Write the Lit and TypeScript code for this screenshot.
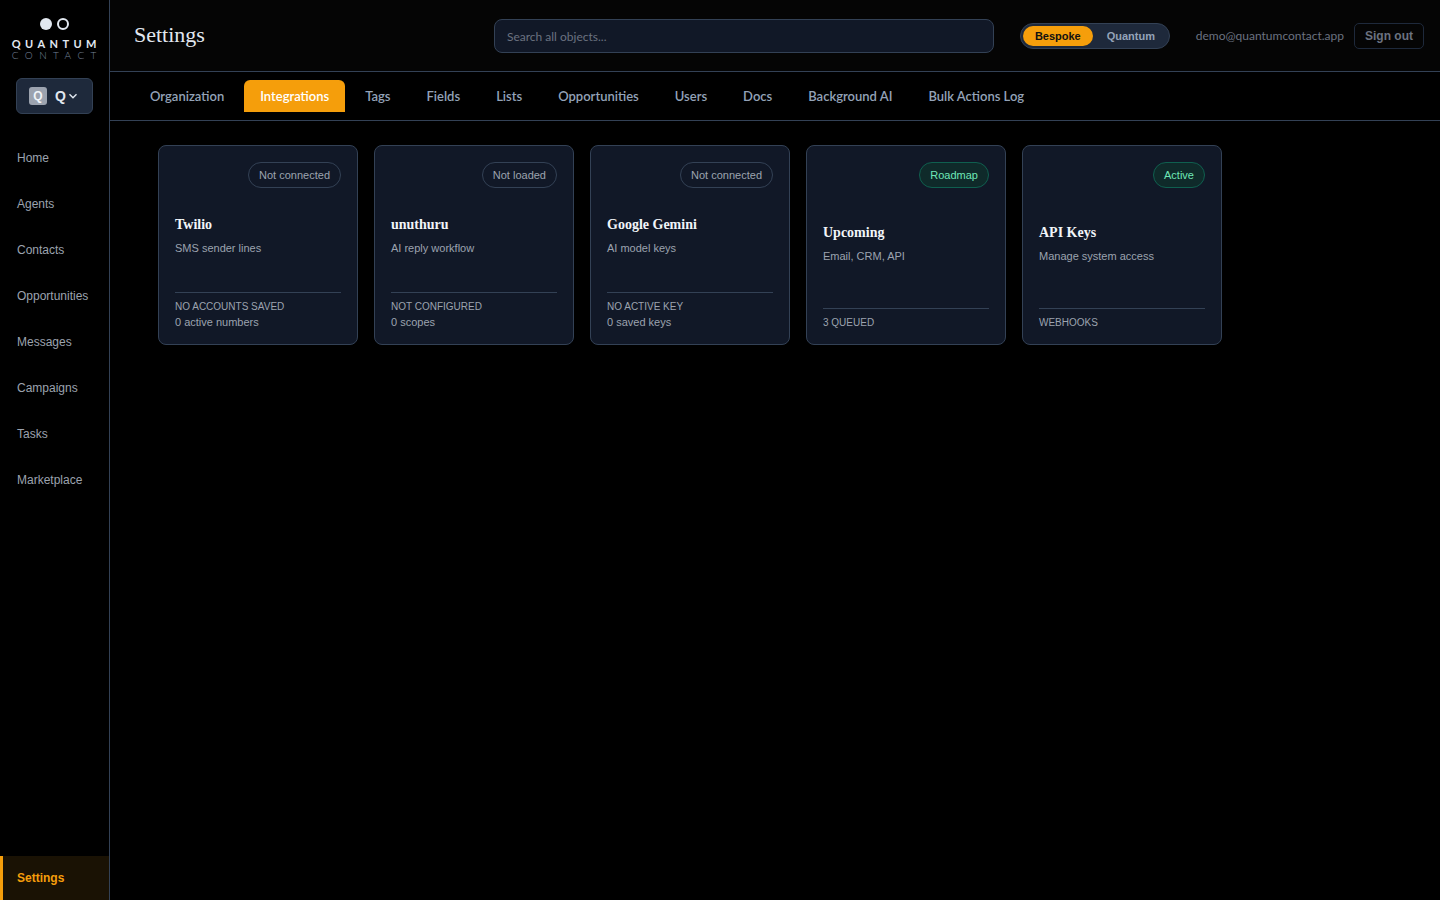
import { LitElement, html, css, nothing } from 'lit';
import { customElement, state } from 'lit/decorators.js';

interface Integration {
  name: string;
  desc: string;
  badge: string;
  live?: boolean;
  meta: string;
  sub?: string;
}

const NAV = ['Home', 'Agents', 'Contacts', 'Opportunities', 'Messages', 'Campaigns', 'Tasks', 'Marketplace'];
const TABS = ['Organization', 'Integrations', 'Tags', 'Fields', 'Lists', 'Opportunities', 'Users', 'Docs', 'Background AI', 'Bulk Actions Log'];

const CARDS: Integration[] = [
  { name: 'Twilio', desc: 'SMS sender lines', badge: 'Not connected', meta: 'NO ACCOUNTS SAVED', sub: '0 active numbers' },
  { name: 'unuthuru', desc: 'AI reply workflow', badge: 'Not loaded', meta: 'NOT CONFIGURED', sub: '0 scopes' },
  { name: 'Google Gemini', desc: 'AI model keys', badge: 'Not connected', meta: 'NO ACTIVE KEY', sub: '0 saved keys' },
  { name: 'Upcoming', desc: 'Email, CRM, API', badge: 'Roadmap', live: true, meta: '3 QUEUED' },
  { name: 'API Keys', desc: 'Manage system access', badge: 'Active', live: true, meta: 'WEBHOOKS' },
];

@customElement('app-root')
export class AppRoot extends LitElement {
  static styles = css`
    :host {
      display: flex;
      height: 900px;
      background: #000;
      color: #e2e8f0;
      font-family: 'Liberation Sans', Arial, sans-serif;
      overflow: hidden;
    }
    .sidebar {
      width: 110px;
      box-sizing: border-box;
      flex: none;
      border-right: 1px solid #334155;
      display: flex;
      flex-direction: column;
      background: #000;
    }
    .logo {
      height: 71px;
      display: flex;
      flex-direction: column;
      align-items: center;
      box-sizing: border-box;
      padding-top: 18px;
      font-family: Lato, sans-serif;
    }
    .dots {
      display: flex;
      gap: 5px;
      height: 12px;
    }
    .dot {
      width: 12px;
      height: 12px;
      border-radius: 50%;
      background: #e2e8f0;
      box-sizing: border-box;
    }
    .dot.ring {
      background: transparent;
      border: 2px solid #e2e8f0;
    }
    .word {
      margin-top: 8px;
      font-size: 11px;
      line-height: 11px;
      font-weight: 700;
      letter-spacing: 4.4px;
      margin-right: -3.6px;
      color: #e2e8f0;
    }
    .word2 {
      margin-top: 1px;
      font-size: 10px;
      line-height: 10px;
      font-weight: 300;
      letter-spacing: 6.4px;
      margin-right: -5.6px;
      color: #76849a;
    }
    .workspace {
      margin: 7px 0 0 16px;
      width: 77px;
      height: 36px;
      box-sizing: border-box;
      background: #1e293b;
      border: 1px solid #334155;
      border-radius: 6px;
      display: flex;
      align-items: center;
      padding-left: 12px;
      font-weight: 700;
      color: #e2e8f0;
    }
    .ws-icon {
      width: 18px;
      height: 18px;
      border-radius: 3px;
      background: #9ca3af;
      font-size: 12px;
      display: flex;
      align-items: center;
      justify-content: center;
      color: #f1f5f9;
    }
    .ws-name {
      margin-left: 8px;
      font-size: 14px;
    }
    .ws-chev {
      margin-left: 2px;
      display: block;
    }
    nav {
      margin-top: 21px;
      display: flex;
      flex-direction: column;
    }
    .nav-item {
      height: 46px;
      padding-left: 17px;
      display: flex;
      align-items: center;
      font-size: 12px;
      color: #9ca3af;
    }
    .settings-link {
      margin-top: auto;
      height: 44px;
      box-sizing: border-box;
      border-left: 3px solid #f59e0b;
      padding-left: 14px;
      background: #1a1204;
      color: #f59e0b;
      font-size: 12px;
      font-weight: 700;
      display: flex;
      align-items: center;
    }
    .main {
      flex: 1;
      min-width: 0;
      display: flex;
      flex-direction: column;
    }
    header {
      height: 72px;
      box-sizing: border-box;
      border-bottom: 1px solid #334155;
      background: #050505;
      display: flex;
      align-items: center;
      padding: 0 16px 0 24px;
    }
    h1 {
      margin: 0 0 2px;
      width: 360px;
      font-family: 'Liberation Serif', serif;
      font-weight: 400;
      font-size: 22px;
      color: #e2e8f0;
    }
    .search {
      width: 500px;
      height: 34px;
      box-sizing: border-box;
      background: #111827;
      border: 1px solid #334155;
      border-radius: 8px;
      padding: 1px 12px 0;
      display: flex;
      align-items: center;
      font-family: Lato, sans-serif;
      font-size: 12px;
      color: #6b7280;
    }
    .switch {
      margin-left: 26px;
      width: 150px;
      height: 26px;
      box-sizing: border-box;
      background: #1e293b;
      border: 1px solid #334155;
      border-radius: 13px;
      padding: 2px;
      display: flex;
      font-size: 11px;
      font-weight: 700;
      color: #94a3b8;
    }
    .switch span {
      display: flex;
      align-items: center;
      justify-content: center;
      border-radius: 10px;
      height: 20px;
    }
    .switch .on {
      width: 70px;
      background: #f59e0b;
      color: #111;
    }
    .switch .off {
      width: 74px;
      box-sizing: border-box;
      padding-left: 2px;
    }
    .email {
      margin-left: 26px;
      font-family: Lato, sans-serif;
      font-size: 12px;
      color: #6b7280;
    }
    .signout {
      margin-left: 10px;
      width: 70px;
      height: 26px;
      box-sizing: border-box;
      border: 1px solid #1e293b;
      border-radius: 5px;
      display: flex;
      align-items: center;
      justify-content: center;
      font-size: 12px;
      font-weight: 700;
      color: #6b7280;
    }
    .tabs {
      height: 49px;
      box-sizing: border-box;
      border-bottom: 1px solid #334155;
      display: flex;
      align-items: center;
      padding: 0 24px;
      gap: 4px;
      font-family: Lato, sans-serif;
      font-size: 13px;
      font-weight: 600;
      color: #94a3b8;
    }
    .tab {
      height: 32px;
      padding: 0 16px;
      display: flex;
      align-items: center;
      border-radius: 4px 4px 0 0;
    }
    .tab.active {
      background: #f59e0b;
      color: #fff;
      border-radius: 6px 6px 0 0;
    }
    .cards {
      display: flex;
      gap: 16px;
      padding: 24px 48px;
    }
    .card {
      width: 200px;
      height: 200px;
      box-sizing: border-box;
      background: #111827;
      border: 1px solid #334155;
      border-radius: 8px;
      padding: 16px 16px 13px;
      display: flex;
      flex-direction: column;
    }
    .badge {
      align-self: flex-end;
      height: 26px;
      box-sizing: border-box;
      padding: 0 10px;
      border: 1px solid #334155;
      border-radius: 13px;
      display: flex;
      align-items: center;
      font-size: 11px;
      color: #9ca3af;
    }
    .badge.live {
      background: #0f2a2a;
      border-color: #0f5f4f;
      color: #6ee7b7;
    }
    .body {
      flex: 1;
      display: flex;
      flex-direction: column;
      justify-content: center;
      padding-bottom: 9px;
    }
    h3 {
      margin: 0;
      font-family: 'Liberation Serif', serif;
      font-size: 14px;
      line-height: 20px;
      font-weight: 700;
      color: #f1f5f9;
    }
    .desc {
      margin-top: 5px;
      font-size: 11px;
      line-height: 16px;
      color: #9ca3af;
    }
    .foot {
      border-top: 1px solid #334155;
      padding-top: 6px;
      font-size: 10px;
      line-height: 16px;
      color: #9ca3af;
    }
    .foot .sub {
      font-size: 11px;
      margin: -1px 0 1px;
    }
  `;

  @state() private activeTab = 'Integrations';

  private renderCard(c: Integration) {
    return html`
      <div class="card">
        <div class="badge ${c.live ? 'live' : ''}">${c.badge}</div>
        <div class="body">
          <h3>${c.name}</h3>
          <div class="desc">${c.desc}</div>
        </div>
        <div class="foot">
          <div>${c.meta}</div>
          ${c.sub ? html`<div class="sub">${c.sub}</div>` : nothing}
        </div>
      </div>
    `;
  }

  protected render() {
    return html`
      <aside class="sidebar">
        <div class="logo">
          <div class="dots"><div class="dot"></div><div class="dot ring"></div></div>
          <div class="word">QUANTUM</div>
          <div class="word2">CONTACT</div>
        </div>
        <div class="workspace">
          <div class="ws-icon">Q</div>
          <div class="ws-name">Q</div>
          <svg class="ws-chev" width="10" height="10" viewBox="0 0 10 10" fill="none" stroke="#e2e8f0" stroke-width="1.4">
            <path d="M1.5 3.2 5 6.7l3.5-3.5" />
          </svg>
        </div>
        <nav>${NAV.map((n) => html`<div class="nav-item">${n}</div>`)}</nav>
        <div class="settings-link">Settings</div>
      </aside>
      <div class="main">
        <header>
          <h1>Settings</h1>
          <div class="search">Search all objects...</div>
          <div class="switch"><span class="on">Bespoke</span><span class="off">Quantum</span></div>
          <div class="email">demo@quantumcontact.app</div>
          <div class="signout">Sign out</div>
        </header>
        <div class="tabs">
          ${TABS.map((t) => html`<div class="tab ${t === this.activeTab ? 'active' : ''}">${t}</div>`)}
        </div>
        <div class="cards">${CARDS.map((c) => this.renderCard(c))}</div>
      </div>
    `;
  }
}
